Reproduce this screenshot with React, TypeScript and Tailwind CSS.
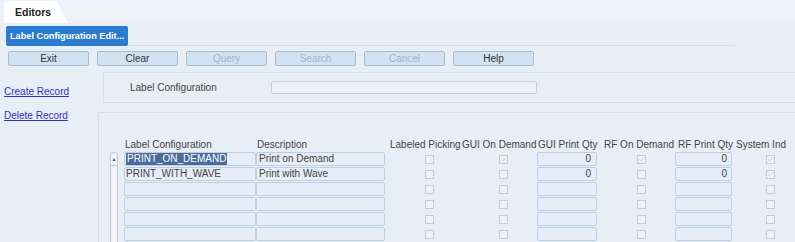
import { Check } from "lucide-react";

type Row = {
  code: string;
  desc: string;
  picking: boolean;
  guiDemand: boolean;
  guiQty: string;
  rfDemand: boolean;
  rfQty: string;
  system: boolean;
  selected?: boolean;
};

const rows: Row[] = [
  { code: "PRINT_ON_DEMAND", desc: "Print on Demand", picking: false, guiDemand: true, guiQty: "0", rfDemand: true, rfQty: "0", system: true, selected: true },
  { code: "PRINT_WITH_WAVE", desc: "Print with Wave", picking: false, guiDemand: false, guiQty: "0", rfDemand: false, rfQty: "0", system: true },
  { code: "", desc: "", picking: false, guiDemand: false, guiQty: "", rfDemand: false, rfQty: "", system: false },
  { code: "", desc: "", picking: false, guiDemand: false, guiQty: "", rfDemand: false, rfQty: "", system: false },
  { code: "", desc: "", picking: false, guiDemand: false, guiQty: "", rfDemand: false, rfQty: "", system: false },
  { code: "", desc: "", picking: false, guiDemand: false, guiQty: "", rfDemand: false, rfQty: "", system: false },
];

const buttons = [
  { label: "Exit", disabled: false },
  { label: "Clear", disabled: false },
  { label: "Query", disabled: true },
  { label: "Search", disabled: true },
  { label: "Cancel", disabled: true },
  { label: "Help", disabled: false },
];

function Box({ checked }: { checked: boolean }) {
  return (
    <div className="flex h-[9px] w-[9px] items-center justify-center border border-[#c3ccd7] bg-[#eef2f7] text-[#a8b2bf]">
      {checked && <Check size={7} strokeWidth={2} />}
    </div>
  );
}

function Field({ children, className = "" }: { children?: React.ReactNode; className?: string }) {
  return (
    <div
      className={`flex h-[14px] items-center rounded-[2px] border border-[#bccfe5] bg-[#e6edf6] ${className}`}
    >
      {children}
    </div>
  );
}

export default function App() {
  return (
    <div className="h-[242px] w-[795px] overflow-hidden bg-[#e8eef6] font-['Liberation_Sans',Arial,sans-serif] text-[10px] leading-[12px] text-[#444]">
      {/* tab strip */}
      <div className="flex h-[23px] items-end bg-[#edf2f9] pl-[4px]">
        <div className="flex h-[22px] w-[64px] items-center bg-white pl-[11px] text-[10.5px] font-bold text-[#222] [clip-path:polygon(0_0,82%_0,100%_100%,0_100%)]">
          Editors
        </div>
      </div>

      {/* editor title */}
      <div className="mt-[3px] flex items-end pl-[6px] pr-[60px]">
        <div className="flex h-[20px] items-center rounded-[2px] bg-[#2b7cd0] px-[4px] text-[9.2px] font-bold text-white">
          Label Configuration Edit...
        </div>
        <div className="flex-1 border-b border-[#d3deeb]" />
      </div>

      {/* toolbar */}
      <div className="mt-[5px] flex gap-[8px] pl-[8px]">
        {buttons.map((b) => (
          <div
            key={b.label}
            className={`flex h-[15px] w-[81px] items-center justify-center rounded-[2px] border border-[#a9bcd3] bg-[#d3e2f2] ${
              b.disabled ? "text-[#a3b3c6]" : "text-[#333]"
            }`}
          >
            {b.label}
          </div>
        ))}
      </div>

      <div className="mt-[6px] flex">
        {/* record links */}
        <div className="flex w-[98px] shrink-0 flex-col gap-[12px] pl-[4px] pt-[14px] text-[#2f33bf] underline">
          <span>Create Record</span>
          <span>Delete Record</span>
        </div>

        <div className="flex flex-1 flex-col">
          {/* search panel */}
          <div className="ml-[5px] flex h-[31px] items-center border-y border-l border-[#d3deea] pl-[26px]">
            <span className="w-[141px]">Label Configuration</span>
            <div className="h-[13px] w-[266px] rounded-[2px] border border-[#c0d0e2] bg-[#edf2f8]" />
          </div>

          {/* results panel */}
          <div className="mt-[9px] flex flex-col border-l border-t border-[#d3deea] pl-[11px] pt-[26px]">
            <div className="flex h-[12px] whitespace-nowrap">
              <div className="w-[15px]" />
              <div className="w-[132px]">Label Configuration</div>
              <div className="w-[133px]">Description</div>
              <div className="w-[72px]">Labeled Picking</div>
              <div className="w-[76px]">GUI On Demand</div>
              <div className="w-[66px]">GUI Print Qty</div>
              <div className="w-[74px]">RF On Demand</div>
              <div className="w-[58px]">RF Print Qty</div>
              <div>System Ind</div>
            </div>

            <div className="mt-[1px] flex">
              {/* scrollbar */}
              <div className="mr-[6px] flex h-[100px] w-[8px] flex-col rounded-t-[3px] border border-[#bfcbd8] bg-[#f1f4f8]">
                <div className="flex h-[13px] items-center justify-center border-b border-[#bfcbd8] text-[5px] leading-none text-[#555]">
                  ▲
                </div>
              </div>

              <div className="flex flex-col gap-[1px]">
                {rows.map((r, i) => (
                  <div key={i} className="flex h-[14px] items-center">
                    <Field className="w-[132px] pl-[1px]">
                      {r.selected ? (
                        <span className="bg-[#4b6b9b] px-[1px] text-white">{r.code}</span>
                      ) : (
                        r.code
                      )}
                    </Field>
                    <Field className="w-[129px] pl-[2px]">{r.desc}</Field>
                    <div className="flex w-[77px] justify-start pl-[40px]">
                      <Box checked={r.picking} />
                    </div>
                    <div className="flex w-[75px] justify-start pl-[37px]">
                      <Box checked={r.guiDemand} />
                    </div>
                    <Field className="w-[60px] justify-end pr-[5px]">{r.guiQty}</Field>
                    <div className="flex w-[78px] justify-start pl-[40px]">
                      <Box checked={r.rfDemand} />
                    </div>
                    <Field className="w-[57px] justify-end pr-[4px]">{r.rfQty}</Field>
                    <div className="flex w-[63px] justify-start pl-[34px]">
                      <Box checked={r.system} />
                    </div>
                  </div>
                ))}
              </div>
            </div>
          </div>
        </div>
      </div>
    </div>
  );
}
